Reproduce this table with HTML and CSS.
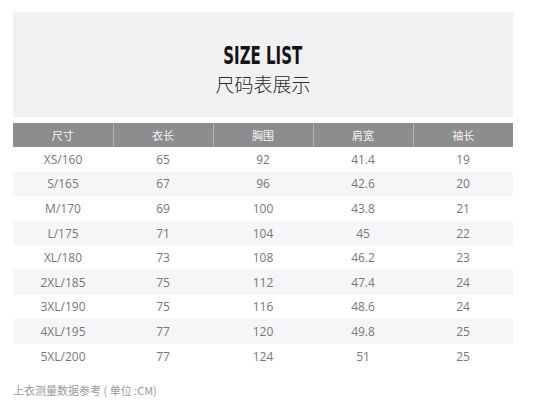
FILE: index.html
```html
<!DOCTYPE html>
<html lang="zh">
<head>
<meta charset="utf-8">
<link rel="stylesheet" href="styles.css">
</head>
<body>
<div class="page">
  <div class="banner">
    <div class="title">SIZE LIST</div>
    <div class="subtitle">尺码表展示</div>
  </div>
  <table class="sizes">
    <thead>
      <tr><th>尺寸</th><th>衣长</th><th>胸围</th><th>肩宽</th><th>袖长</th></tr>
    </thead>
    <tbody>
      <tr><td>XS/160</td><td>65</td><td>92</td><td>41.4</td><td>19</td></tr>
      <tr><td>S/165</td><td>67</td><td>96</td><td>42.6</td><td>20</td></tr>
      <tr><td>M/170</td><td>69</td><td>100</td><td>43.8</td><td>21</td></tr>
      <tr><td>L/175</td><td>71</td><td>104</td><td>45</td><td>22</td></tr>
      <tr><td>XL/180</td><td>73</td><td>108</td><td>46.2</td><td>23</td></tr>
      <tr><td>2XL/185</td><td>75</td><td>112</td><td>47.4</td><td>24</td></tr>
      <tr><td>3XL/190</td><td>75</td><td>116</td><td>48.6</td><td>24</td></tr>
      <tr><td>4XL/195</td><td>77</td><td>120</td><td>49.8</td><td>25</td></tr>
      <tr><td>5XL/200</td><td>77</td><td>124</td><td>51</td><td>25</td></tr>
    </tbody>
  </table>
  <div class="note">上衣测量数据参考 ( 单位 :CM)</div>
</div>
</body>
</html>
```
FILE: styles.css
```css
html, body {
  margin: 0;
  padding: 0;
  background: #ffffff;
}
.page {
  width: 500px;
  padding: 12px 13px 0 13px;
  font-family: "Open Sans", "Noto Sans CJK SC", sans-serif;
}
.banner {
  height: 105px;
  background: #f1f0f2;
  display: flex;
  flex-direction: column;
  align-items: center;
  padding-top: 29px;
  box-sizing: border-box;
}
.title {
  font-family: "DejaVu Sans", sans-serif;
  font-weight: bold;
  font-size: 25px;
  line-height: normal;
  color: #141414;
  transform: scaleX(0.6);
  white-space: nowrap;
}
.subtitle {
  font-family: "Noto Sans CJK SC", sans-serif;
  font-weight: 300;
  font-size: 19px;
  line-height: normal;
  color: #2a2a2a;
}
.sizes {
  margin-top: 6px;
  width: 500px;
  border-collapse: collapse;
  table-layout: fixed;
}
.sizes th {
  height: 24px;
  padding: 0;
  background: #8d8c8e;
  color: #f4f4f4;
  font-family: "Noto Sans CJK SC", sans-serif;
  font-weight: 400;
  font-size: 11px;
  border-left: 1px solid #b3b2b4;
}
.sizes th:first-child {
  border-left: none;
}
.sizes td {
  height: 24.6px;
  padding: 0;
  text-align: center;
  color: #787878;
  font-size: 12px;
}
.sizes tbody tr:nth-child(even) td {
  background: #f6f5f7;
}
.note {
  margin-top: 14px;
  font-family: "Noto Sans CJK SC", sans-serif;
  font-size: 11px;
  color: #9a9a9a;
}
```
